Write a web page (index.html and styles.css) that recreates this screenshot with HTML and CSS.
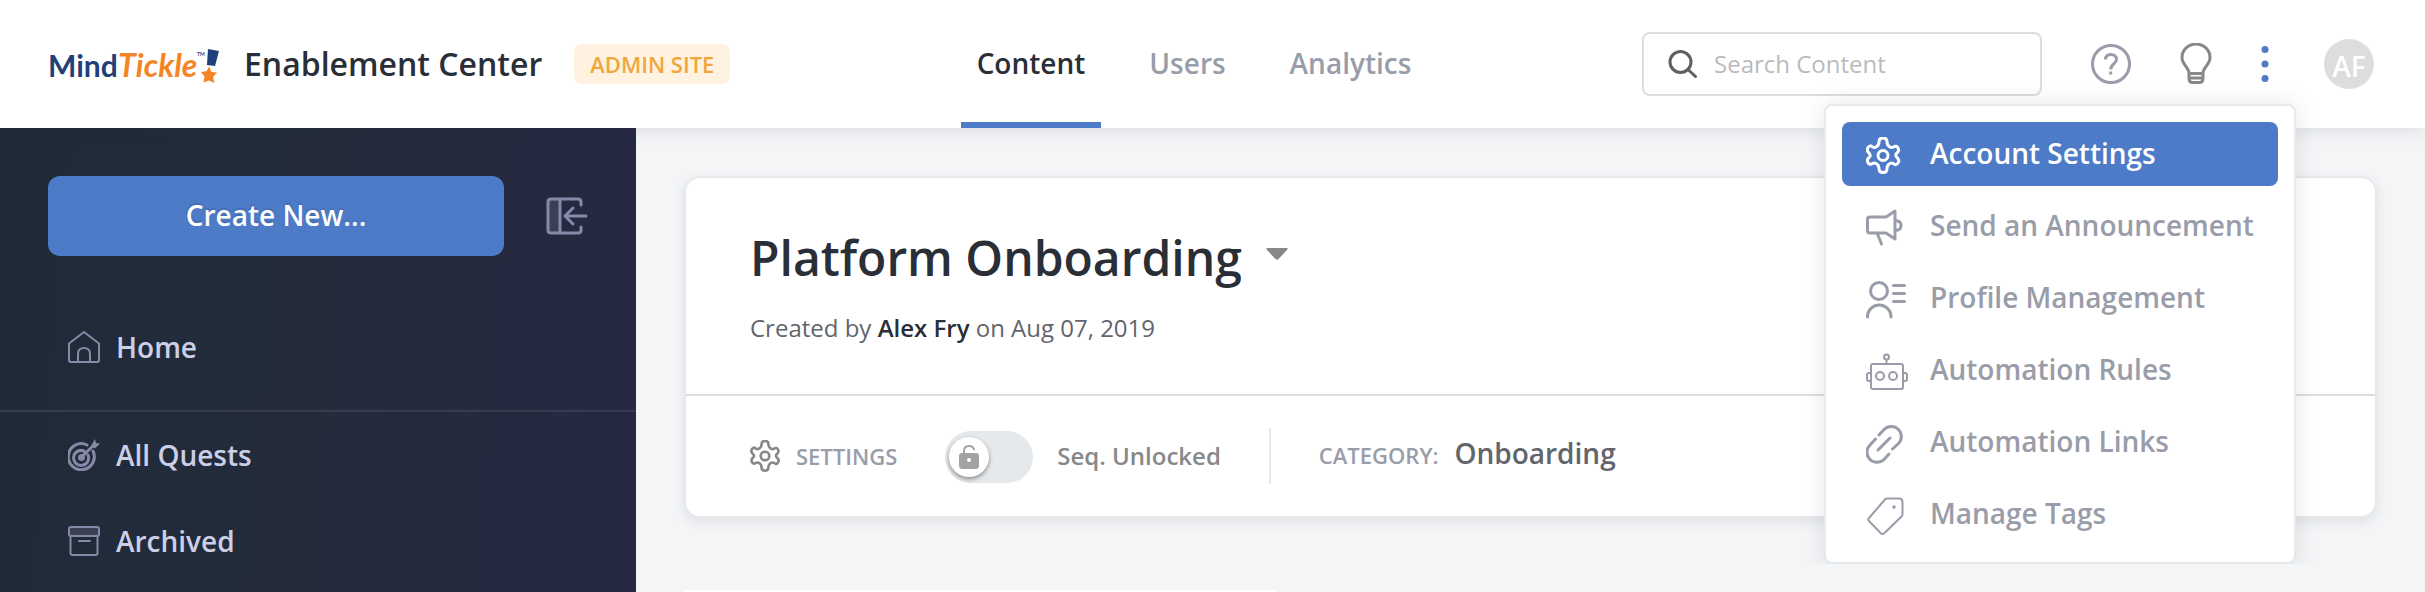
FILE: index.html
```html
<!DOCTYPE html>
<html lang="en">
<head>
<meta charset="utf-8">
<title>Enablement Center</title>
<link rel="stylesheet" href="styles.css">
</head>
<body>
<header class="topbar">
  <div class="brand">
    <svg class="logo" viewBox="0 0 172 44" role="img" aria-label="MindTickle">
      <text class="logo-mind" x="0" y="35">Mind</text>
      <text class="logo-tickle" x="70" y="35">Tickle</text>
      <text class="logo-tm" x="149" y="14">TM</text>
      <path fill="#1f4079" d="M160 7l11 2-4 15-8-1z"/>
      <path fill="#f58426" d="M161 24.500l2.500 5.500 5.500 0.500-4 4.500 1.500 6-5.500-2.500-5.500 2 1-6-3.500-4.500 5.500-0.800z"/>
    </svg>
    <h1 class="product">Enablement Center</h1>
    <span class="badge">ADMIN SITE</span>
  </div>
  <nav class="tabs" aria-label="Main">
    <a class="tab tab-active" href="#content">Content</a>
    <a class="tab" href="#users">Users</a>
    <a class="tab" href="#analytics">Analytics</a>
  </nav>
  <div class="tools">
    <label class="search">
      <svg class="search-icon" viewBox="0 0 30 28"><circle cx="12.500" cy="12" r="10.500"/><path d="M20 19.500l7.500 7"/></svg>
      <input class="search-input" type="search" placeholder="Search Content" aria-label="Search Content">
    </label>
    <button class="tool tool-help" type="button" aria-label="Help">
      <svg viewBox="0 0 40 40" width="40" height="40"><circle cx="20" cy="20" r="18.500"/><path stroke-linecap="butt" d="M14.500 15.500c0-3.500 2.200-5 5.500-5s5.500 2 5.500 5c0 4.500-5.800 4.500-5.800 10M19.700 27.500v3"/></svg>
    </button>
    <button class="tool tool-tips" type="button" aria-label="Tips">
      <svg viewBox="0 0 32 42" width="32" height="42"><path d="M9 30.500C9 24 2 22 2 14.500a14 13.500 0 0 1 28 0C30 22 23 24 23 30.500zM9 30.500v5q0 4 4 4h6q4 0 4-4v-5M10 35h12"/></svg>
    </button>
    <button class="tool tool-more" type="button" aria-label="More" aria-expanded="true">
      <svg viewBox="0 0 8 38" width="8" height="38"><circle cx="4" cy="4.500" r="3.500"/><circle cx="4" cy="19" r="3.500"/><circle cx="4" cy="33.500" r="3.500"/></svg>
    </button>
    <button class="avatar" type="button">AF</button>
    <div class="menu" role="menu">
      <a class="menu-item menu-item-active" role="menuitem" href="#account">
        <svg class="menu-icon" viewBox="0 0 42 42"><use href="#gear"/></svg>Account Settings</a>
      <a class="menu-item" role="menuitem" href="#announce">
        <svg class="menu-icon" viewBox="0 0 42 42"><path d="M4 8h16l9-6v28l-9-6H4q-2.500 0-2.500-2.500v-11Q1.500 8 4 8zM11.500 25l4 10M29 11.500q6 0 6 5t-6 5"/></svg>Send an Announcement</a>
      <a class="menu-item" role="menuitem" href="#profile">
        <svg class="menu-icon" viewBox="0 0 42 42"><circle cx="13" cy="10" r="8.500"/><path d="M1.500 36v-1.500a11.800 11.500 0 0 1 23.500 0V36M27.500 4.500h11M27.500 12.500h11M27.500 20.500h11"/></svg>Profile Management</a>
      <a class="menu-item" role="menuitem" href="#rules">
        <svg class="menu-icon menu-icon-thin" viewBox="0 0 42 42"><rect x="5" y="11" width="32" height="25" rx="2"/><circle cx="14" cy="23" r="4"/><circle cx="27" cy="23" r="4"/><circle cx="20.500" cy="4" r="2.500"/><path d="M20.500 6.500V11M5 20H3q-2 0-2 2v4q0 2 2 2h2M37 20h2q2 0 2 2v4q0 2-2 2h-2"/></svg>Automation Rules</a>
      <a class="menu-item" role="menuitem" href="#links">
        <svg class="menu-icon" viewBox="0 0 42 42"><path d="M13 10l5-5.500a10 10 0 0 1 14.500 14L26.500 24M9.500 14l-5.500 6a10 10 0 0 0 14 14.500l5-5.500M12 25L24 13"/></svg>Automation Links</a>
      <a class="menu-item" role="menuitem" href="#tags">
        <svg class="menu-icon menu-icon-thin" viewBox="0 0 42 42"><path d="M21 1.500h12q3.500 0 3.500 3.500v12q0 1.500-1 2.500L18 36.500q-1.500 1-3 0L3 24q-1.500-1.500 0-3L19 2.500q1-1 2-1z"/><circle cx="28" cy="10" r="0.800"/></svg>Manage Tags</a>
    </div>
  </div>
</header>

<div class="shell">
  <aside class="sidebar">
    <div class="actions">
      <button class="create" type="button">Create New...</button>
      <button class="collapse" type="button" aria-label="Collapse sidebar">
        <svg viewBox="0 0 42 38" width="42" height="38"><path fill="#3c4054" stroke="none" d="M2 2h12v34H2z"/><path d="M35 8V5q0-3-3-3H5Q2 2 2 5v28q0 3 3 3h27q3 0 3-3v-3M14 2v34M40 19H20M27 11l-8 8 8 8"/></svg>
      </button>
    </div>
    <nav class="side-nav" aria-label="Content">
      <a class="side-link side-home" href="#home">
        <svg class="side-icon" viewBox="0 0 32 32"><path d="M1 12.500L16 1l15 11.500V29q0 2-2 2H3q-2 0-2-2zM10 31V23q0-6 6-6t6 6v8"/></svg>Home</a>
      <a class="side-link" href="#quests">
        <svg class="side-icon side-icon-bold" viewBox="0 0 32 32"><path d="M19 6A13 13 0 1 0 25 12M16 12a7.500 7.500 0 1 0 4 4M13 18.500L27 5"/><circle cx="13.500" cy="18.500" r="2"/><path fill="#868aa8" stroke="none" d="M23 7l4-7 1 4 4 0.500-5 5z"/></svg>All Quests</a>
      <a class="side-link" href="#archived">
        <svg class="side-icon" viewBox="0 0 32 32"><rect x="1" y="2" width="30" height="9" rx="2" fill="#3c4054"/><path d="M2.500 11v17q0 2 2 2h23q2 0 2-2V11M11 16h11"/></svg>Archived</a>
    </nav>
  </aside>

  <main class="main">
    <section class="card">
      <div class="card-head">
        <div class="title-row">
          <h2 class="title">Platform Onboarding</h2>
          <button class="caret" type="button" aria-label="Switch series"><svg viewBox="0 0 22 12" width="22" height="12"><path d="M2 0h18q3 0 1 2l-8.500 9q-1.500 1.500-3 0L1 2q-2-2 1-2z"/></svg></button>
        </div>
        <p class="byline">Created by <strong>Alex Fry</strong> on Aug 07, 2019</p>
      </div>
      <div class="card-foot">
        <button class="settings" type="button">
          <svg class="settings-icon" viewBox="0 0 34 37">
            <g id="gear"><path d="M13 5q0-4 4-4t4 4q0 3.500 3 5 1.500 1 3.500 0 3-2 4.500 1t-1 5q-2.500 2 0 4.500 3 2.500 1 5.500t-4.500 0.500q-2-1-3.500 0-3 1.500-3 5 0 4-4 4t-4-4q0-3.500-3-5-1.500-1-3.500 0-3 2-4.500-1t1-5q2.500-2 0-4.500-3-2.500-1-5.500t4.500-0.500q2 1 3.500 0 3-1.500 3-5z"/><circle cx="17" cy="18.500" r="5"/></g>
          </svg>SETTINGS</button>
        <label class="seq">
          <span class="switch">
            <input class="switch-input" type="checkbox">
            <span class="knob"><svg viewBox="0 0 20 24" width="20" height="24"><path fill="none" stroke="#a3a3a3" stroke-width="2" d="M5 10V6q0-5 5-5 4 0 5 3.500"/><path fill="#a3a3a3" fill-rule="evenodd" d="M3 8h14q3 0 3 3v9q0 4-3 4H3q-3 0-3-4v-9q0-3 3-3zM10 13a2 2 0 1 0 0 4 2 2 0 0 0 0-4z"/></svg></span>
          </span>
          Seq. Unlocked
        </label>
        <dl class="category">
          <dt>CATEGORY:</dt>
          <dd>Onboarding</dd>
        </dl>
      </div>
    </section>
    <section class="panel"></section>
  </main>
</div>
</body>
</html>
```

FILE: styles.css
```css
* { box-sizing: border-box; }
body {
  margin: 0;
  min-height: 100vh;
  display: flex;
  flex-direction: column;
  background: #f4f5f7;
  color: #2a2e36;
  font-family: "Open Sans", "Noto Sans", sans-serif;
  font-size: 28px;
  line-height: 40px;
}
button, input { font: inherit; color: inherit; }
button { border: 0; padding: 0; background: none; cursor: pointer; }
a { color: inherit; text-decoration: none; }
svg { display: block; fill: none; stroke-linecap: round; stroke-linejoin: round; flex: none; }

.topbar {
  position: relative;
  z-index: 2;
  display: grid;
  grid-template-columns: 1fr auto 1fr;
  height: 128px;
  padding: 0 51px 0 48px;
  background: #fff;
  box-shadow: 0 2px 16px rgba(40, 46, 60, 0.12);
}
.brand { display: flex; align-items: center; }
.logo { width: 172px; height: 44px; margin-right: 24px; }
.logo text { font-family: Lato, sans-serif; font-weight: 700; stroke: none; }
.logo-mind { fill: #1f4079; font-size: 30px; }
.logo-tickle { fill: #f58426; font-size: 32px; font-style: italic; }
.logo .logo-tm { fill: #1f4079; font-size: 5px; }
.product { margin: 0; font-size: 32px; font-weight: 600; }
.badge {
  margin-left: 32px;
  padding: 0 16px;
  border-radius: 8px;
  background: #fff2e0;
  color: #f0a63c;
  font-size: 22px;
  font-weight: 600;
}

.tabs { display: flex; gap: 32px; margin-right: 34px; }
.tab {
  display: flex;
  align-items: center;
  padding: 4px 16px 0;
  border-bottom: 6px solid transparent;
  color: #999da9;
  font-weight: 600;
}
.tab-active { border-color: #4d7bc7; color: #2a2e36; }

.tools { position: relative; display: flex; align-items: center; justify-content: flex-end; }
.search {
  display: flex;
  align-items: center;
  gap: 16px;
  width: 400px;
  height: 64px;
  margin-right: 49px;
  padding: 0 24px;
  border: 2px solid #ddd;
  border-radius: 8px;
}
.search-icon { width: 30px; height: 28px; stroke: #5f5f5f; stroke-width: 3; }
.search-input { flex: 1; min-width: 0; padding: 0; border: 0; outline: 0; background: none; font-size: 24px; }
.search-input::placeholder { color: #bbb; opacity: 1; }
.tool-help { margin-right: 49px; stroke: #999da9; stroke-width: 3; }
.tool-tips { margin-right: 49px; stroke: #888; stroke-width: 3; }
.tool-more { margin-right: 55px; }
.tool-more svg { fill: #4d7bc7; }
.avatar {
  width: 50px;
  height: 50px;
  padding-top: 4px;
  border-radius: 50%;
  background: #ddd;
  color: #fff;
  font-weight: 600;
}

.menu {
  position: absolute;
  top: 104px;
  right: 78px;
  display: flex;
  flex-direction: column;
  gap: 8px;
  width: 472px;
  padding: 16px;
  border: 2px solid #e5e9ec;
  border-radius: 8px;
  background: #fff;
  box-shadow: 0 0 24px rgba(40, 46, 60, 0.12);
  clip-path: inset(-40px -40px 0 -40px);
}
.menu-item {
  display: flex;
  align-items: center;
  gap: 22px;
  height: 64px;
  padding: 0 24px 2px;
  border-radius: 8px;
  color: #999da9;
  font-weight: 600;
  white-space: nowrap;
}
.menu-item-active { background: #4d7bc7; color: #fff; }
.menu-icon { width: 42px; height: 42px; margin-top: 10px; stroke: currentColor; stroke-width: 3; }
.menu-icon-thin { stroke-width: 2; }

.shell { flex: 1; display: flex; }
.sidebar { width: 636px; flex: none; background: linear-gradient(95deg, #1f2b37, #242b3c 55%, #262843); }
.actions { display: flex; align-items: center; gap: 42px; padding: 48px; }
.create {
  flex: 1;
  height: 80px;
  padding-bottom: 2px;
  border-radius: 12px;
  background: #4d7bc7;
  color: #fff;
  font-weight: 600;
  text-shadow: 0 -2px 2px rgba(0, 0, 0, 0.12);
}
.collapse { stroke: #868aa8; stroke-width: 3; }
.side-link {
  display: flex;
  align-items: center;
  gap: 16px;
  height: 86px;
  padding: 0 68px;
  color: #cccfe8;
  font-weight: 600;
}
.side-home { height: 108px; padding-bottom: 20px; border-bottom: 2px solid #373c4c; }
.side-icon { width: 32px; height: 32px; stroke: #868aa8; stroke-width: 2; }
.side-icon-bold { stroke-width: 3; }

.main { flex: 1; min-width: 0; display: flex; flex-direction: column; padding: 48px 48px 0; }
.card {
  border: 2px solid #e5e9ec;
  border-radius: 16px;
  background: #fff;
  box-shadow: 0 4px 12px rgba(40, 46, 60, 0.1);
}
.card-head { padding: 48px 64px 46px; border-bottom: 2px solid #ddd; }
.title-row { display: flex; align-items: center; gap: 24px; }
.title { margin: 0; font-size: 48px; line-height: 64px; font-weight: 600; }
.caret { margin-bottom: 8px; }
.caret svg { fill: #888; }
.byline { margin: 18px 0 0; color: #62656b; font-size: 24px; }
.byline strong { color: #2a2e36; font-weight: 600; }
.card-foot { display: flex; align-items: center; height: 120px; padding: 0 64px; }
.settings { display: flex; align-items: center; gap: 16px; color: #999da9; font-size: 22px; font-weight: 600; }
.settings-icon { width: 30px; height: 32px; stroke: #888; stroke-width: 3; }
.seq { display: flex; align-items: center; gap: 24px; margin-left: 48px; color: #888; font-size: 24px; font-weight: 600; }
.switch { position: relative; width: 88px; height: 52px; margin-top: 2px; }
.switch-input { appearance: none; display: block; width: 88px; height: 52px; margin: 0; border-radius: 26px; background: #e5e9ec; }
.knob {
  position: absolute;
  top: 6px;
  left: 4px;
  display: grid;
  place-items: center;
  width: 40px;
  height: 40px;
  border-radius: 50%;
  background: #fff;
  box-shadow: 0 2px 4px rgba(0, 0, 0, 0.4);
}
.category { display: flex; align-items: baseline; gap: 16px; height: 56px; margin: 0 0 0 48px; padding: 5px 0 0 48px; border-left: 2px solid #e5e9ec; font-weight: 600; }
.category dt { color: #999da9; font-size: 22px; }
.category dd { margin: 0; color: #62656b; }
.panel { flex: 1; width: 35%; margin-top: 72px; background: #fff; }
```
